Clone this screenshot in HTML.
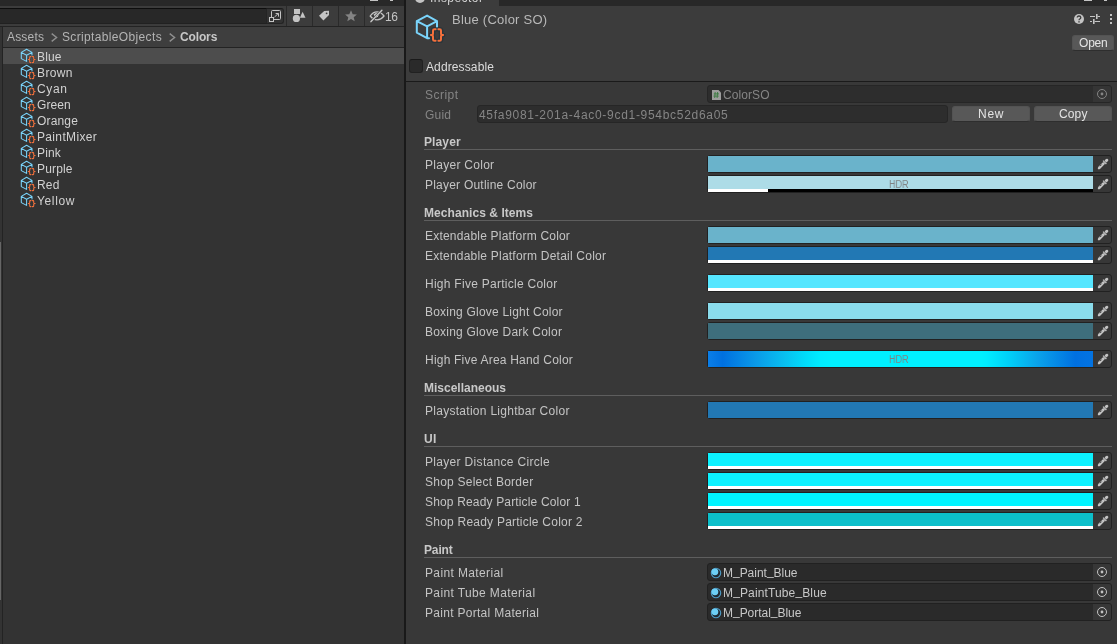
<!DOCTYPE html>
<html><head><meta charset="utf-8"><title>Unity</title>
<style>
*{box-sizing:border-box}
html,body{margin:0;padding:0}
body{width:1117px;height:644px;overflow:hidden;background:#383838;position:relative;font-family:"Liberation Sans",sans-serif}
div,svg,span{position:absolute}
.t{height:16px;white-space:pre;line-height:16px;will-change:transform}
.ico{overflow:visible}
em{font-style:normal;position:relative;top:-2.4px}
.cf{left:707px;width:405px;height:18px;border:1px solid #212121;border-radius:3px;background:#373737}
.cf i{position:absolute;left:0;top:0;width:385px;height:16px}
.cf b{position:absolute;left:0;top:13px;width:385px;height:3px;background:#fff}
.cf u{position:absolute;left:60px;top:13px;width:325px;height:3px;background:#000}
.of{left:707px;width:405px;height:18px;border:1px solid #212121;border-radius:3px;background:#2a2a2a;overflow:hidden}
.of i{position:absolute;right:0;top:0;width:18px;height:16px;background:#373737}
.hl{left:424px;width:688px;height:1px;background:#5e5e5e}
.btn{background:#585858;border:1px solid #535353;border-bottom-color:#2e2e2e;border-radius:3px}
</style></head><body>

<div style="left:0;top:0;width:404px;height:644px;background:#333"></div>
<div style="left:0;top:0;width:404px;height:6px;background:#282828"></div>
<div style="left:0;top:6px;width:404px;height:20px;background:#3c3c3c"></div>
<div style="left:-5px;top:8px;width:289px;height:16px;background:#323232;border:1px solid #242424;border-top-color:#1c1c1c;border-radius:3px"></div>
<div style="left:-5px;top:8px;width:272px;height:16px;background:#282828;border:1px solid #212121;border-top-color:#0d0d0d;border-right-color:#242424"></div>
<div style="left:286px;top:6px;width:1px;height:20px;background:#2a2a2a"></div>
<div style="left:312px;top:6px;width:1px;height:20px;background:#2a2a2a"></div>
<div style="left:338px;top:6px;width:1px;height:20px;background:#2a2a2a"></div>
<div style="left:364px;top:6px;width:1px;height:20px;background:#2a2a2a"></div>
<div style="left:0;top:26px;width:404px;height:1px;background:#232323"></div>
<div style="left:3px;top:27px;width:401px;height:20px;background:#3e3e3e"></div>
<div style="left:3px;top:47px;width:401px;height:1px;background:#232323"></div>
<div style="left:3px;top:48px;width:401px;height:16px;background:#4d4d4d"></div>
<div style="left:2px;top:27px;width:1px;height:617px;background:#232323"></div>
<div style="left:0;top:242px;width:1px;height:358px;background:#666"></div>
<div style="left:404px;top:0;width:2px;height:644px;background:#191919"></div>
<div style="left:406px;top:0;width:711px;height:6px;background:#282828"></div>
<div style="left:406px;top:0;width:93px;height:6px;background:#3c3c3c"></div>
<div style="left:406px;top:6px;width:711px;height:75px;background:#3c3c3c"></div>
<div style="left:406px;top:81px;width:711px;height:1px;background:#1a1a1a"></div>
<div class="t" style="left:430px;top:-10px;font-size:12px;color:#d2d2d2;letter-spacing:.45px">Inspector</div>
<div style="left:415px;top:-7px;width:10px;height:10px;border-radius:5px;background:#c4c4c4"></div>
<div style="left:370px;top:0;width:8px;height:1px;background:#c4c4c4"></div>
<div style="left:390px;top:0;width:3px;height:1px;background:#c4c4c4"></div>
<div style="left:1084px;top:0;width:8px;height:1px;background:#c4c4c4"></div>
<div style="left:1104px;top:0;width:3px;height:1px;background:#c4c4c4"></div>
<svg style="left:268px;top:9px" width="15" height="14" viewBox="0 0 15 14"><g fill="none" stroke="#c4c4c4" stroke-width="1"><rect x="3.5" y="1.5" width="9" height="9" rx="1"/><rect x="1.5" y="8.5" width="4" height="4" fill="#323232"/><path d="M6.5 8 L10.3 4.5 M7.6 4.5 H10.5 V7.6"/></g></svg>
<svg style="left:292px;top:8px" width="15" height="15" viewBox="0 0 15 15"><g fill="#c4c4c4"><rect x="2" y="1" width="6" height="5"/><circle cx="4.4" cy="10.4" r="3.6"/><path d="M10.6 3.8 L13.5 9.8 H7.9 Z"/></g></svg>
<svg style="left:318px;top:9px" width="13" height="13" viewBox="0 0 13 13"><path d="M1 6.8 L6.2 2 L11 1.7 V6 L5.4 11.6 Z" fill="#c4c4c4"/><circle cx="8.6" cy="4.3" r=".9" fill="#3c3c3c"/></svg>
<svg style="left:344px;top:10px" width="14" height="12" viewBox="0 0 14 12"><path d="M7 0.3 L8.7 4.2 L12.9 4.5 L9.7 7.2 L10.7 11.3 L7 9.1 L3.3 11.3 L4.3 7.2 L1.1 4.5 L5.3 4.2 Z" fill="#848484"/></svg>
<svg style="left:369px;top:9px" width="16" height="14" viewBox="0 0 16 14"><path d="M1.2 7 Q4 2.9 8 2.9 Q12 2.9 15 7 Q12 10.8 8 10.8 Q4 10.8 1.2 7Z" fill="#3a3a3a" stroke="#c4c4c4" stroke-width="1.3"/><path d="M4.6 5.6 Q6.2 3.4 9.6 3.4 L5.8 8Z" fill="#c4c4c4"/><path d="M2 12.6 L12.9 1.2" stroke="#3c3c3c" stroke-width="2.6"/><path d="M2 12.6 L12.9 1.2" stroke="#c4c4c4" stroke-width="1.5" stroke-linecap="round"/><path d="M7.6 8.4 L9.4 6.6" stroke="#c4c4c4" stroke-width="1"/></svg>
<svg class="ico" style="left:413px;top:11px" width="32" height="32" viewBox="0 0 32 32"><g fill="none" stroke-linecap="round" stroke-linejoin="round"><path d="M14.1 4.6 L3.8 10.1 L14.1 15.3 L24 10.1 Z M3.8 10.1 V21.6 L14.1 27.2 V15.3 M24 10.1 V16.5 M14.1 27.2 H16" stroke="#7ad4fb" stroke-width="2"/><path d="M22.6 18.2 H21.4 Q20 18.2 20 19.6 V22.4 Q20 24 17.9 24 Q20 24 20 25.6 V28.4 Q20 29.8 21.4 29.8 H22.6 M25.4 18.2 H26.6 Q28 18.2 28 19.6 V22.4 Q28 24 30.1 24 Q28 24 28 25.6 V28.4 Q28 29.8 26.6 29.8 H25.4" stroke="#25333b" stroke-width="4.6" opacity=".85"/><path d="M22.6 18.2 H21.4 Q20 18.2 20 19.6 V22.4 Q20 24 17.9 24 Q20 24 20 25.6 V28.4 Q20 29.8 21.4 29.8 H22.6 M25.4 18.2 H26.6 Q28 18.2 28 19.6 V22.4 Q28 24 30.1 24 Q28 24 28 25.6 V28.4 Q28 29.8 26.6 29.8 H25.4" stroke="#f4703c" stroke-width="2"/></g></svg>
<svg class="ico" style="left:19px;top:47px" width="16" height="16" viewBox="0 0 16 16"><g fill="none" stroke-linecap="round" stroke-linejoin="round" transform="translate(0.5,0.5)"><path d="M7.1 1.8 L1.8 4.9 L7.1 7.7 L12.5 4.9 Z M1.8 4.9 V11.1 L7.1 13.9 V7.7 M12.5 4.9 V7.6" stroke="#7ad4fb" stroke-width="1.05"/><path d="M11.5 9.1 H10.8 Q10.2 9.1 10.2 9.7 V11.2 Q10.2 12 8.8 12 Q10.2 12 10.2 12.8 V14.5 Q10.2 15.1 10.8 15.1 H11.5 M12.9 9.1 H13.6 Q14.2 9.1 14.2 9.7 V11.2 Q14.2 12 15.6 12 Q14.2 12 14.2 12.8 V14.5 Q14.2 15.1 13.6 15.1 H12.9" stroke="#2b3a42" stroke-width="2.4" opacity=".5"/><path d="M11.5 9.1 H10.8 Q10.2 9.1 10.2 9.7 V11.2 Q10.2 12 8.8 12 Q10.2 12 10.2 12.8 V14.5 Q10.2 15.1 10.8 15.1 H11.5 M12.9 9.1 H13.6 Q14.2 9.1 14.2 9.7 V11.2 Q14.2 12 15.6 12 Q14.2 12 14.2 12.8 V14.5 Q14.2 15.1 13.6 15.1 H12.9" stroke="#f5703a" stroke-width="1.05"/></g></svg>
<svg class="ico" style="left:19px;top:63px" width="16" height="16" viewBox="0 0 16 16"><g fill="none" stroke-linecap="round" stroke-linejoin="round" transform="translate(0.5,0.5)"><path d="M7.1 1.8 L1.8 4.9 L7.1 7.7 L12.5 4.9 Z M1.8 4.9 V11.1 L7.1 13.9 V7.7 M12.5 4.9 V7.6" stroke="#7ad4fb" stroke-width="1.05"/><path d="M11.5 9.1 H10.8 Q10.2 9.1 10.2 9.7 V11.2 Q10.2 12 8.8 12 Q10.2 12 10.2 12.8 V14.5 Q10.2 15.1 10.8 15.1 H11.5 M12.9 9.1 H13.6 Q14.2 9.1 14.2 9.7 V11.2 Q14.2 12 15.6 12 Q14.2 12 14.2 12.8 V14.5 Q14.2 15.1 13.6 15.1 H12.9" stroke="#2b3a42" stroke-width="2.4" opacity=".5"/><path d="M11.5 9.1 H10.8 Q10.2 9.1 10.2 9.7 V11.2 Q10.2 12 8.8 12 Q10.2 12 10.2 12.8 V14.5 Q10.2 15.1 10.8 15.1 H11.5 M12.9 9.1 H13.6 Q14.2 9.1 14.2 9.7 V11.2 Q14.2 12 15.6 12 Q14.2 12 14.2 12.8 V14.5 Q14.2 15.1 13.6 15.1 H12.9" stroke="#f5703a" stroke-width="1.05"/></g></svg>
<svg class="ico" style="left:19px;top:79px" width="16" height="16" viewBox="0 0 16 16"><g fill="none" stroke-linecap="round" stroke-linejoin="round" transform="translate(0.5,0.5)"><path d="M7.1 1.8 L1.8 4.9 L7.1 7.7 L12.5 4.9 Z M1.8 4.9 V11.1 L7.1 13.9 V7.7 M12.5 4.9 V7.6" stroke="#7ad4fb" stroke-width="1.05"/><path d="M11.5 9.1 H10.8 Q10.2 9.1 10.2 9.7 V11.2 Q10.2 12 8.8 12 Q10.2 12 10.2 12.8 V14.5 Q10.2 15.1 10.8 15.1 H11.5 M12.9 9.1 H13.6 Q14.2 9.1 14.2 9.7 V11.2 Q14.2 12 15.6 12 Q14.2 12 14.2 12.8 V14.5 Q14.2 15.1 13.6 15.1 H12.9" stroke="#2b3a42" stroke-width="2.4" opacity=".5"/><path d="M11.5 9.1 H10.8 Q10.2 9.1 10.2 9.7 V11.2 Q10.2 12 8.8 12 Q10.2 12 10.2 12.8 V14.5 Q10.2 15.1 10.8 15.1 H11.5 M12.9 9.1 H13.6 Q14.2 9.1 14.2 9.7 V11.2 Q14.2 12 15.6 12 Q14.2 12 14.2 12.8 V14.5 Q14.2 15.1 13.6 15.1 H12.9" stroke="#f5703a" stroke-width="1.05"/></g></svg>
<svg class="ico" style="left:19px;top:95px" width="16" height="16" viewBox="0 0 16 16"><g fill="none" stroke-linecap="round" stroke-linejoin="round" transform="translate(0.5,0.5)"><path d="M7.1 1.8 L1.8 4.9 L7.1 7.7 L12.5 4.9 Z M1.8 4.9 V11.1 L7.1 13.9 V7.7 M12.5 4.9 V7.6" stroke="#7ad4fb" stroke-width="1.05"/><path d="M11.5 9.1 H10.8 Q10.2 9.1 10.2 9.7 V11.2 Q10.2 12 8.8 12 Q10.2 12 10.2 12.8 V14.5 Q10.2 15.1 10.8 15.1 H11.5 M12.9 9.1 H13.6 Q14.2 9.1 14.2 9.7 V11.2 Q14.2 12 15.6 12 Q14.2 12 14.2 12.8 V14.5 Q14.2 15.1 13.6 15.1 H12.9" stroke="#2b3a42" stroke-width="2.4" opacity=".5"/><path d="M11.5 9.1 H10.8 Q10.2 9.1 10.2 9.7 V11.2 Q10.2 12 8.8 12 Q10.2 12 10.2 12.8 V14.5 Q10.2 15.1 10.8 15.1 H11.5 M12.9 9.1 H13.6 Q14.2 9.1 14.2 9.7 V11.2 Q14.2 12 15.6 12 Q14.2 12 14.2 12.8 V14.5 Q14.2 15.1 13.6 15.1 H12.9" stroke="#f5703a" stroke-width="1.05"/></g></svg>
<svg class="ico" style="left:19px;top:111px" width="16" height="16" viewBox="0 0 16 16"><g fill="none" stroke-linecap="round" stroke-linejoin="round" transform="translate(0.5,0.5)"><path d="M7.1 1.8 L1.8 4.9 L7.1 7.7 L12.5 4.9 Z M1.8 4.9 V11.1 L7.1 13.9 V7.7 M12.5 4.9 V7.6" stroke="#7ad4fb" stroke-width="1.05"/><path d="M11.5 9.1 H10.8 Q10.2 9.1 10.2 9.7 V11.2 Q10.2 12 8.8 12 Q10.2 12 10.2 12.8 V14.5 Q10.2 15.1 10.8 15.1 H11.5 M12.9 9.1 H13.6 Q14.2 9.1 14.2 9.7 V11.2 Q14.2 12 15.6 12 Q14.2 12 14.2 12.8 V14.5 Q14.2 15.1 13.6 15.1 H12.9" stroke="#2b3a42" stroke-width="2.4" opacity=".5"/><path d="M11.5 9.1 H10.8 Q10.2 9.1 10.2 9.7 V11.2 Q10.2 12 8.8 12 Q10.2 12 10.2 12.8 V14.5 Q10.2 15.1 10.8 15.1 H11.5 M12.9 9.1 H13.6 Q14.2 9.1 14.2 9.7 V11.2 Q14.2 12 15.6 12 Q14.2 12 14.2 12.8 V14.5 Q14.2 15.1 13.6 15.1 H12.9" stroke="#f5703a" stroke-width="1.05"/></g></svg>
<svg class="ico" style="left:19px;top:127px" width="16" height="16" viewBox="0 0 16 16"><g fill="none" stroke-linecap="round" stroke-linejoin="round" transform="translate(0.5,0.5)"><path d="M7.1 1.8 L1.8 4.9 L7.1 7.7 L12.5 4.9 Z M1.8 4.9 V11.1 L7.1 13.9 V7.7 M12.5 4.9 V7.6" stroke="#7ad4fb" stroke-width="1.05"/><path d="M11.5 9.1 H10.8 Q10.2 9.1 10.2 9.7 V11.2 Q10.2 12 8.8 12 Q10.2 12 10.2 12.8 V14.5 Q10.2 15.1 10.8 15.1 H11.5 M12.9 9.1 H13.6 Q14.2 9.1 14.2 9.7 V11.2 Q14.2 12 15.6 12 Q14.2 12 14.2 12.8 V14.5 Q14.2 15.1 13.6 15.1 H12.9" stroke="#2b3a42" stroke-width="2.4" opacity=".5"/><path d="M11.5 9.1 H10.8 Q10.2 9.1 10.2 9.7 V11.2 Q10.2 12 8.8 12 Q10.2 12 10.2 12.8 V14.5 Q10.2 15.1 10.8 15.1 H11.5 M12.9 9.1 H13.6 Q14.2 9.1 14.2 9.7 V11.2 Q14.2 12 15.6 12 Q14.2 12 14.2 12.8 V14.5 Q14.2 15.1 13.6 15.1 H12.9" stroke="#f5703a" stroke-width="1.05"/></g></svg>
<svg class="ico" style="left:19px;top:143px" width="16" height="16" viewBox="0 0 16 16"><g fill="none" stroke-linecap="round" stroke-linejoin="round" transform="translate(0.5,0.5)"><path d="M7.1 1.8 L1.8 4.9 L7.1 7.7 L12.5 4.9 Z M1.8 4.9 V11.1 L7.1 13.9 V7.7 M12.5 4.9 V7.6" stroke="#7ad4fb" stroke-width="1.05"/><path d="M11.5 9.1 H10.8 Q10.2 9.1 10.2 9.7 V11.2 Q10.2 12 8.8 12 Q10.2 12 10.2 12.8 V14.5 Q10.2 15.1 10.8 15.1 H11.5 M12.9 9.1 H13.6 Q14.2 9.1 14.2 9.7 V11.2 Q14.2 12 15.6 12 Q14.2 12 14.2 12.8 V14.5 Q14.2 15.1 13.6 15.1 H12.9" stroke="#2b3a42" stroke-width="2.4" opacity=".5"/><path d="M11.5 9.1 H10.8 Q10.2 9.1 10.2 9.7 V11.2 Q10.2 12 8.8 12 Q10.2 12 10.2 12.8 V14.5 Q10.2 15.1 10.8 15.1 H11.5 M12.9 9.1 H13.6 Q14.2 9.1 14.2 9.7 V11.2 Q14.2 12 15.6 12 Q14.2 12 14.2 12.8 V14.5 Q14.2 15.1 13.6 15.1 H12.9" stroke="#f5703a" stroke-width="1.05"/></g></svg>
<svg class="ico" style="left:19px;top:159px" width="16" height="16" viewBox="0 0 16 16"><g fill="none" stroke-linecap="round" stroke-linejoin="round" transform="translate(0.5,0.5)"><path d="M7.1 1.8 L1.8 4.9 L7.1 7.7 L12.5 4.9 Z M1.8 4.9 V11.1 L7.1 13.9 V7.7 M12.5 4.9 V7.6" stroke="#7ad4fb" stroke-width="1.05"/><path d="M11.5 9.1 H10.8 Q10.2 9.1 10.2 9.7 V11.2 Q10.2 12 8.8 12 Q10.2 12 10.2 12.8 V14.5 Q10.2 15.1 10.8 15.1 H11.5 M12.9 9.1 H13.6 Q14.2 9.1 14.2 9.7 V11.2 Q14.2 12 15.6 12 Q14.2 12 14.2 12.8 V14.5 Q14.2 15.1 13.6 15.1 H12.9" stroke="#2b3a42" stroke-width="2.4" opacity=".5"/><path d="M11.5 9.1 H10.8 Q10.2 9.1 10.2 9.7 V11.2 Q10.2 12 8.8 12 Q10.2 12 10.2 12.8 V14.5 Q10.2 15.1 10.8 15.1 H11.5 M12.9 9.1 H13.6 Q14.2 9.1 14.2 9.7 V11.2 Q14.2 12 15.6 12 Q14.2 12 14.2 12.8 V14.5 Q14.2 15.1 13.6 15.1 H12.9" stroke="#f5703a" stroke-width="1.05"/></g></svg>
<svg class="ico" style="left:19px;top:175px" width="16" height="16" viewBox="0 0 16 16"><g fill="none" stroke-linecap="round" stroke-linejoin="round" transform="translate(0.5,0.5)"><path d="M7.1 1.8 L1.8 4.9 L7.1 7.7 L12.5 4.9 Z M1.8 4.9 V11.1 L7.1 13.9 V7.7 M12.5 4.9 V7.6" stroke="#7ad4fb" stroke-width="1.05"/><path d="M11.5 9.1 H10.8 Q10.2 9.1 10.2 9.7 V11.2 Q10.2 12 8.8 12 Q10.2 12 10.2 12.8 V14.5 Q10.2 15.1 10.8 15.1 H11.5 M12.9 9.1 H13.6 Q14.2 9.1 14.2 9.7 V11.2 Q14.2 12 15.6 12 Q14.2 12 14.2 12.8 V14.5 Q14.2 15.1 13.6 15.1 H12.9" stroke="#2b3a42" stroke-width="2.4" opacity=".5"/><path d="M11.5 9.1 H10.8 Q10.2 9.1 10.2 9.7 V11.2 Q10.2 12 8.8 12 Q10.2 12 10.2 12.8 V14.5 Q10.2 15.1 10.8 15.1 H11.5 M12.9 9.1 H13.6 Q14.2 9.1 14.2 9.7 V11.2 Q14.2 12 15.6 12 Q14.2 12 14.2 12.8 V14.5 Q14.2 15.1 13.6 15.1 H12.9" stroke="#f5703a" stroke-width="1.05"/></g></svg>
<svg class="ico" style="left:19px;top:191px" width="16" height="16" viewBox="0 0 16 16"><g fill="none" stroke-linecap="round" stroke-linejoin="round" transform="translate(0.5,0.5)"><path d="M7.1 1.8 L1.8 4.9 L7.1 7.7 L12.5 4.9 Z M1.8 4.9 V11.1 L7.1 13.9 V7.7 M12.5 4.9 V7.6" stroke="#7ad4fb" stroke-width="1.05"/><path d="M11.5 9.1 H10.8 Q10.2 9.1 10.2 9.7 V11.2 Q10.2 12 8.8 12 Q10.2 12 10.2 12.8 V14.5 Q10.2 15.1 10.8 15.1 H11.5 M12.9 9.1 H13.6 Q14.2 9.1 14.2 9.7 V11.2 Q14.2 12 15.6 12 Q14.2 12 14.2 12.8 V14.5 Q14.2 15.1 13.6 15.1 H12.9" stroke="#2b3a42" stroke-width="2.4" opacity=".5"/><path d="M11.5 9.1 H10.8 Q10.2 9.1 10.2 9.7 V11.2 Q10.2 12 8.8 12 Q10.2 12 10.2 12.8 V14.5 Q10.2 15.1 10.8 15.1 H11.5 M12.9 9.1 H13.6 Q14.2 9.1 14.2 9.7 V11.2 Q14.2 12 15.6 12 Q14.2 12 14.2 12.8 V14.5 Q14.2 15.1 13.6 15.1 H12.9" stroke="#f5703a" stroke-width="1.05"/></g></svg>
<svg style="left:51px;top:33px" width="7" height="9" viewBox="0 0 7 9"><path d="M0.7 .6 L5.6 4.5 L0.7 8.4" fill="none" stroke="#909090" stroke-width="1.4"/></svg>
<svg style="left:169.3px;top:33px" width="7" height="9" viewBox="0 0 7 9"><path d="M0.7 .6 L5.6 4.5 L0.7 8.4" fill="none" stroke="#909090" stroke-width="1.4"/></svg>
<svg style="left:1073px;top:13px" width="12" height="12" viewBox="0 0 12 12"><circle cx="6" cy="6" r="5" fill="#c4c4c4"/><path d="M4.2 4.6 Q4.2 3 6 3 Q7.8 3 7.8 4.5 Q7.8 5.4 6.8 6 Q6 6.5 6 7.3" fill="none" stroke="#3c3c3c" stroke-width="1.3"/><rect x="5.3" y="8.2" width="1.4" height="1.3" fill="#3c3c3c"/></svg>
<svg style="left:1089px;top:13px" width="12" height="12" viewBox="0 0 12 12"><g fill="#c4c4c4"><rect x="1" y="3" width="5" height="1"/><rect x="7" y="1" width="1.6" height="5"/><rect x="8.6" y="3" width="2.4" height="1"/><rect x="1" y="8" width="2" height="1"/><rect x="4" y="6" width="1.6" height="5"/><rect x="5.6" y="8" width="5.4" height="1"/></g></svg>
<div style="left:1110px;top:14px;width:2px;height:2px;background:#c4c4c4"></div>
<div style="left:1110px;top:18px;width:2px;height:2px;background:#c4c4c4"></div>
<div style="left:1110px;top:22px;width:2px;height:2px;background:#c4c4c4"></div>
<div class="btn" style="left:1072px;top:35px;width:42px;height:16px"></div>
<div style="left:409px;top:59px;width:14px;height:14px;background:#2a2a2a;border:1px solid #212121;border-top-color:#1a1a1a;border-radius:3px"></div>
<div class="of" style="top:85px;background:#2d2d2d;border-color:#262626"><i style="background:#353535"></i></div>
<svg style="left:712px;top:90px" width="9" height="10" viewBox="0 0 9 10"><path d="M0 0 H6.5 L9 2.5 V10 H0 Z" fill="#9d9d9d"/><path d="M3.2 2 L2.7 8 M5.6 2 L5.1 8 M1.8 3.9 H7 M1.5 6.1 H6.7" stroke="#3a7a40" stroke-width=".9" fill="none"/></svg>
<div style="left:477px;top:105px;width:471px;height:18px;background:#2d2d2d;border:1px solid #262626;border-radius:3px"></div>
<div class="btn" style="left:952px;top:106px;width:78px;height:16px"></div>
<div class="btn" style="left:1034px;top:106px;width:78px;height:16px"></div>
<svg style="left:1096px;top:88px" width="12" height="12" viewBox="0 0 12 12"><circle cx="6" cy="6" r="4.5" fill="none" stroke="#858585" stroke-width="1"/><circle cx="6" cy="6" r="1.4" fill="#858585"/></svg>
<div class="hl" style="top:149px"></div>
<div class="cf" style="top:155px"><i style="background:#6ab3cb"></i></div>
<svg style="left:1097px;top:158px" width="12" height="12" viewBox="0 0 12 12"><g fill="#c4c4c4"><path d="M1 11.3 Q0.3 10 1.6 8.5 L6.2 3.9 L8.1 5.8 L3.5 10.4 Q2.3 11.6 1 11.3 Z"/><path d="M5.6 3.1 L6.5 2.2 L9.8 5.5 L8.9 6.4 Z"/><path d="M7.6 2.7 Q8.7 0.3 10.3 0.7 Q11.6 1.2 11.3 2.6 Q10.8 3.9 9.3 4.4 Z"/></g><path d="M3 8.2 L4.6 6.6" stroke="#373737" stroke-width="1"/></svg>
<div class="cf" style="top:175px"><i style="background:#addce7"></i><b></b><u></u></div>
<svg style="left:1097px;top:178px" width="12" height="12" viewBox="0 0 12 12"><g fill="#c4c4c4"><path d="M1 11.3 Q0.3 10 1.6 8.5 L6.2 3.9 L8.1 5.8 L3.5 10.4 Q2.3 11.6 1 11.3 Z"/><path d="M5.6 3.1 L6.5 2.2 L9.8 5.5 L8.9 6.4 Z"/><path d="M7.6 2.7 Q8.7 0.3 10.3 0.7 Q11.6 1.2 11.3 2.6 Q10.8 3.9 9.3 4.4 Z"/></g><path d="M3 8.2 L4.6 6.6" stroke="#373737" stroke-width="1"/></svg>
<div class="hl" style="top:220px"></div>
<div class="cf" style="top:226px"><i style="background:#6ab3cb"></i></div>
<svg style="left:1097px;top:229px" width="12" height="12" viewBox="0 0 12 12"><g fill="#c4c4c4"><path d="M1 11.3 Q0.3 10 1.6 8.5 L6.2 3.9 L8.1 5.8 L3.5 10.4 Q2.3 11.6 1 11.3 Z"/><path d="M5.6 3.1 L6.5 2.2 L9.8 5.5 L8.9 6.4 Z"/><path d="M7.6 2.7 Q8.7 0.3 10.3 0.7 Q11.6 1.2 11.3 2.6 Q10.8 3.9 9.3 4.4 Z"/></g><path d="M3 8.2 L4.6 6.6" stroke="#373737" stroke-width="1"/></svg>
<div class="cf" style="top:246px"><i style="background:#2278b4"></i><b></b></div>
<svg style="left:1097px;top:249px" width="12" height="12" viewBox="0 0 12 12"><g fill="#c4c4c4"><path d="M1 11.3 Q0.3 10 1.6 8.5 L6.2 3.9 L8.1 5.8 L3.5 10.4 Q2.3 11.6 1 11.3 Z"/><path d="M5.6 3.1 L6.5 2.2 L9.8 5.5 L8.9 6.4 Z"/><path d="M7.6 2.7 Q8.7 0.3 10.3 0.7 Q11.6 1.2 11.3 2.6 Q10.8 3.9 9.3 4.4 Z"/></g><path d="M3 8.2 L4.6 6.6" stroke="#373737" stroke-width="1"/></svg>
<div class="cf" style="top:274px"><i style="background:#56e6ff"></i><b></b></div>
<svg style="left:1097px;top:277px" width="12" height="12" viewBox="0 0 12 12"><g fill="#c4c4c4"><path d="M1 11.3 Q0.3 10 1.6 8.5 L6.2 3.9 L8.1 5.8 L3.5 10.4 Q2.3 11.6 1 11.3 Z"/><path d="M5.6 3.1 L6.5 2.2 L9.8 5.5 L8.9 6.4 Z"/><path d="M7.6 2.7 Q8.7 0.3 10.3 0.7 Q11.6 1.2 11.3 2.6 Q10.8 3.9 9.3 4.4 Z"/></g><path d="M3 8.2 L4.6 6.6" stroke="#373737" stroke-width="1"/></svg>
<div class="cf" style="top:302px"><i style="background:#8adcec"></i></div>
<svg style="left:1097px;top:305px" width="12" height="12" viewBox="0 0 12 12"><g fill="#c4c4c4"><path d="M1 11.3 Q0.3 10 1.6 8.5 L6.2 3.9 L8.1 5.8 L3.5 10.4 Q2.3 11.6 1 11.3 Z"/><path d="M5.6 3.1 L6.5 2.2 L9.8 5.5 L8.9 6.4 Z"/><path d="M7.6 2.7 Q8.7 0.3 10.3 0.7 Q11.6 1.2 11.3 2.6 Q10.8 3.9 9.3 4.4 Z"/></g><path d="M3 8.2 L4.6 6.6" stroke="#373737" stroke-width="1"/></svg>
<div class="cf" style="top:322px"><i style="background:#3e6e7c"></i></div>
<svg style="left:1097px;top:325px" width="12" height="12" viewBox="0 0 12 12"><g fill="#c4c4c4"><path d="M1 11.3 Q0.3 10 1.6 8.5 L6.2 3.9 L8.1 5.8 L3.5 10.4 Q2.3 11.6 1 11.3 Z"/><path d="M5.6 3.1 L6.5 2.2 L9.8 5.5 L8.9 6.4 Z"/><path d="M7.6 2.7 Q8.7 0.3 10.3 0.7 Q11.6 1.2 11.3 2.6 Q10.8 3.9 9.3 4.4 Z"/></g><path d="M3 8.2 L4.6 6.6" stroke="#373737" stroke-width="1"/></svg>
<div class="cf" style="top:350px"><i style="background:linear-gradient(90deg,#0a7ee8 0,#0070e0 3.8%,#0a9ae8 12.5%,#08c0f0 20%,#00dcfa 25.3%,#00ecff 29.2%,#00f0ff 32%,#00f0ff 71%,#00ecff 72.5%,#00d0f8 78.2%,#0aa4ea 85.3%,#0070e0 95.4%,#0373e2 100%)"></i></div>
<svg style="left:1097px;top:353px" width="12" height="12" viewBox="0 0 12 12"><g fill="#c4c4c4"><path d="M1 11.3 Q0.3 10 1.6 8.5 L6.2 3.9 L8.1 5.8 L3.5 10.4 Q2.3 11.6 1 11.3 Z"/><path d="M5.6 3.1 L6.5 2.2 L9.8 5.5 L8.9 6.4 Z"/><path d="M7.6 2.7 Q8.7 0.3 10.3 0.7 Q11.6 1.2 11.3 2.6 Q10.8 3.9 9.3 4.4 Z"/></g><path d="M3 8.2 L4.6 6.6" stroke="#373737" stroke-width="1"/></svg>
<div class="hl" style="top:395px"></div>
<div class="cf" style="top:401px"><i style="background:#2278b4"></i></div>
<svg style="left:1097px;top:404px" width="12" height="12" viewBox="0 0 12 12"><g fill="#c4c4c4"><path d="M1 11.3 Q0.3 10 1.6 8.5 L6.2 3.9 L8.1 5.8 L3.5 10.4 Q2.3 11.6 1 11.3 Z"/><path d="M5.6 3.1 L6.5 2.2 L9.8 5.5 L8.9 6.4 Z"/><path d="M7.6 2.7 Q8.7 0.3 10.3 0.7 Q11.6 1.2 11.3 2.6 Q10.8 3.9 9.3 4.4 Z"/></g><path d="M3 8.2 L4.6 6.6" stroke="#373737" stroke-width="1"/></svg>
<div class="hl" style="top:446px"></div>
<div class="cf" style="top:452px"><i style="background:#0cf2ff"></i><b></b></div>
<svg style="left:1097px;top:455px" width="12" height="12" viewBox="0 0 12 12"><g fill="#c4c4c4"><path d="M1 11.3 Q0.3 10 1.6 8.5 L6.2 3.9 L8.1 5.8 L3.5 10.4 Q2.3 11.6 1 11.3 Z"/><path d="M5.6 3.1 L6.5 2.2 L9.8 5.5 L8.9 6.4 Z"/><path d="M7.6 2.7 Q8.7 0.3 10.3 0.7 Q11.6 1.2 11.3 2.6 Q10.8 3.9 9.3 4.4 Z"/></g><path d="M3 8.2 L4.6 6.6" stroke="#373737" stroke-width="1"/></svg>
<div class="cf" style="top:472px"><i style="background:#0cf2ff"></i><b></b></div>
<svg style="left:1097px;top:475px" width="12" height="12" viewBox="0 0 12 12"><g fill="#c4c4c4"><path d="M1 11.3 Q0.3 10 1.6 8.5 L6.2 3.9 L8.1 5.8 L3.5 10.4 Q2.3 11.6 1 11.3 Z"/><path d="M5.6 3.1 L6.5 2.2 L9.8 5.5 L8.9 6.4 Z"/><path d="M7.6 2.7 Q8.7 0.3 10.3 0.7 Q11.6 1.2 11.3 2.6 Q10.8 3.9 9.3 4.4 Z"/></g><path d="M3 8.2 L4.6 6.6" stroke="#373737" stroke-width="1"/></svg>
<div class="cf" style="top:492px"><i style="background:#00f4ff"></i><b></b></div>
<svg style="left:1097px;top:495px" width="12" height="12" viewBox="0 0 12 12"><g fill="#c4c4c4"><path d="M1 11.3 Q0.3 10 1.6 8.5 L6.2 3.9 L8.1 5.8 L3.5 10.4 Q2.3 11.6 1 11.3 Z"/><path d="M5.6 3.1 L6.5 2.2 L9.8 5.5 L8.9 6.4 Z"/><path d="M7.6 2.7 Q8.7 0.3 10.3 0.7 Q11.6 1.2 11.3 2.6 Q10.8 3.9 9.3 4.4 Z"/></g><path d="M3 8.2 L4.6 6.6" stroke="#373737" stroke-width="1"/></svg>
<div class="cf" style="top:512px"><i style="background:#0cbfca"></i><b></b></div>
<svg style="left:1097px;top:515px" width="12" height="12" viewBox="0 0 12 12"><g fill="#c4c4c4"><path d="M1 11.3 Q0.3 10 1.6 8.5 L6.2 3.9 L8.1 5.8 L3.5 10.4 Q2.3 11.6 1 11.3 Z"/><path d="M5.6 3.1 L6.5 2.2 L9.8 5.5 L8.9 6.4 Z"/><path d="M7.6 2.7 Q8.7 0.3 10.3 0.7 Q11.6 1.2 11.3 2.6 Q10.8 3.9 9.3 4.4 Z"/></g><path d="M3 8.2 L4.6 6.6" stroke="#373737" stroke-width="1"/></svg>
<div class="hl" style="top:557px"></div>
<div class="of" style="top:563px"><i></i></div>
<svg style="left:710px;top:567px" width="12" height="12" viewBox="0 0 12 12"><circle cx="6" cy="6" r="4.7" fill="#1f2a33" stroke="#4d9ac4" stroke-width="1.1"/><circle cx="4.9" cy="4.8" r="3.4" fill="#6dcff6"/></svg>
<svg style="left:1096px;top:566px" width="12" height="12" viewBox="0 0 12 12"><circle cx="6" cy="6" r="4.5" fill="none" stroke="#c4c4c4" stroke-width="1"/><circle cx="6" cy="6" r="1.4" fill="#c4c4c4"/></svg>
<div class="of" style="top:583px"><i></i></div>
<svg style="left:710px;top:587px" width="12" height="12" viewBox="0 0 12 12"><circle cx="6" cy="6" r="4.7" fill="#1f2a33" stroke="#4d9ac4" stroke-width="1.1"/><circle cx="4.9" cy="4.8" r="3.4" fill="#6dcff6"/></svg>
<svg style="left:1096px;top:586px" width="12" height="12" viewBox="0 0 12 12"><circle cx="6" cy="6" r="4.5" fill="none" stroke="#c4c4c4" stroke-width="1"/><circle cx="6" cy="6" r="1.4" fill="#c4c4c4"/></svg>
<div class="of" style="top:603px"><i></i></div>
<svg style="left:710px;top:607px" width="12" height="12" viewBox="0 0 12 12"><circle cx="6" cy="6" r="4.7" fill="#1f2a33" stroke="#4d9ac4" stroke-width="1.1"/><circle cx="4.9" cy="4.8" r="3.4" fill="#6dcff6"/></svg>
<svg style="left:1096px;top:606px" width="12" height="12" viewBox="0 0 12 12"><circle cx="6" cy="6" r="4.5" fill="none" stroke="#c4c4c4" stroke-width="1"/><circle cx="6" cy="6" r="1.4" fill="#c4c4c4"/></svg>
<div class="t" style="left:7.0px;top:29px;font-size:12px;color:#b4b4b4;letter-spacing:0.18px">Assets</div>
<div class="t" style="left:62.4px;top:29px;font-size:12px;color:#b4b4b4;letter-spacing:0.35px">ScriptableObjects</div>
<div class="t" style="left:180.0px;top:29px;font-size:12px;font-weight:bold;color:#c8c8c8;letter-spacing:-0.14px">Colors</div>
<div class="t" style="left:36.8px;top:49px;font-size:12px;color:#d2d2d2;letter-spacing:0.17px">Blue</div>
<div class="t" style="left:36.8px;top:65px;font-size:12px;color:#d2d2d2;letter-spacing:0.38px">Brown</div>
<div class="t" style="left:36.8px;top:81px;font-size:12px;color:#d2d2d2;letter-spacing:0.63px">Cyan</div>
<div class="t" style="left:36.8px;top:97px;font-size:12px;color:#d2d2d2;letter-spacing:0.10px">Green</div>
<div class="t" style="left:36.8px;top:113px;font-size:12px;color:#d2d2d2;letter-spacing:0.16px">Orange</div>
<div class="t" style="left:36.8px;top:129px;font-size:12px;color:#d2d2d2;letter-spacing:0.34px">PaintMixer</div>
<div class="t" style="left:36.8px;top:145px;font-size:12px;color:#d2d2d2;letter-spacing:0.13px">Pink</div>
<div class="t" style="left:36.8px;top:161px;font-size:12px;color:#d2d2d2;letter-spacing:0.16px">Purple</div>
<div class="t" style="left:36.8px;top:177px;font-size:12px;color:#d2d2d2;letter-spacing:0.20px">Red</div>
<div class="t" style="left:36.8px;top:193px;font-size:12px;color:#d2d2d2;letter-spacing:0.64px">Yellow</div>
<div class="t" style="left:384.9px;top:9px;font-size:12px;color:#c4c4c4;letter-spacing:-0.30px">16</div>
<div class="t" style="left:451.7px;top:12px;font-size:13px;color:#b9b9b9;letter-spacing:0.24px">Blue (Color SO)</div>
<div class="t" style="left:1078.6px;top:35px;font-size:12px;color:#e4e4e4;letter-spacing:-0.20px">Open</div>
<div class="t" style="left:426.2px;top:59px;font-size:12px;color:#dcdcdc;letter-spacing:0.12px">Addressable</div>
<div class="t" style="left:424.9px;top:87px;font-size:12px;color:#858585;letter-spacing:0.46px">Script</div>
<div class="t" style="left:722.8px;top:87px;font-size:12px;color:#858585;letter-spacing:0.08px">ColorSO</div>
<div class="t" style="left:424.9px;top:107px;font-size:12px;color:#858585;letter-spacing:0.23px">Guid</div>
<div class="t" style="left:479.0px;top:107px;font-size:12px;color:#858585;letter-spacing:0.70px">45fa9081-201a-4ac0-9cd1-954bc52d6a05</div>
<div class="t" style="left:977.5px;top:106px;font-size:12px;color:#e4e4e4;letter-spacing:0.75px">New</div>
<div class="t" style="left:1058.6px;top:106px;font-size:12px;color:#e4e4e4;letter-spacing:0.13px">Copy</div>
<div class="t" style="left:423.6px;top:134px;font-size:12px;font-weight:bold;color:#c8c8c8;letter-spacing:0.12px">Player</div>
<div class="t" style="left:424.5px;top:157px;font-size:12px;color:#c4c4c4;letter-spacing:0.28px">Player Color</div>
<div class="t" style="left:424.5px;top:177px;font-size:12px;color:#c4c4c4;letter-spacing:0.22px">Player Outline Color</div>
<div class="t" style="left:423.6px;top:205px;font-size:12px;font-weight:bold;color:#c8c8c8;letter-spacing:0.06px">Mechanics &amp; Items</div>
<div class="t" style="left:424.5px;top:228px;font-size:12px;color:#c4c4c4;letter-spacing:0.20px">Extendable Platform Color</div>
<div class="t" style="left:424.5px;top:248px;font-size:12px;color:#c4c4c4;letter-spacing:0.22px">Extendable Platform Detail Color</div>
<div class="t" style="left:424.5px;top:276px;font-size:12px;color:#c4c4c4;letter-spacing:0.27px">High Five Particle Color</div>
<div class="t" style="left:424.5px;top:304px;font-size:12px;color:#c4c4c4;letter-spacing:0.21px">Boxing Glove Light Color</div>
<div class="t" style="left:424.5px;top:324px;font-size:12px;color:#c4c4c4;letter-spacing:0.22px">Boxing Glove Dark Color</div>
<div class="t" style="left:424.5px;top:352px;font-size:12px;color:#c4c4c4;letter-spacing:0.21px">High Five Area Hand Color</div>
<div class="t" style="left:423.6px;top:380px;font-size:12px;font-weight:bold;color:#c8c8c8;letter-spacing:0.00px">Miscellaneous</div>
<div class="t" style="left:424.5px;top:403px;font-size:12px;color:#c4c4c4;letter-spacing:0.28px">Playstation Lightbar Color</div>
<div class="t" style="left:423.6px;top:431px;font-size:12px;font-weight:bold;color:#c8c8c8;letter-spacing:0.40px">UI</div>
<div class="t" style="left:424.5px;top:454px;font-size:12px;color:#c4c4c4;letter-spacing:0.32px">Player Distance Circle</div>
<div class="t" style="left:424.5px;top:474px;font-size:12px;color:#c4c4c4;letter-spacing:0.24px">Shop Select Border</div>
<div class="t" style="left:424.5px;top:494px;font-size:12px;color:#c4c4c4;letter-spacing:0.16px">Shop Ready Particle Color 1</div>
<div class="t" style="left:424.5px;top:514px;font-size:12px;color:#c4c4c4;letter-spacing:0.23px">Shop Ready Particle Color 2</div>
<div class="t" style="left:423.6px;top:542px;font-size:12px;font-weight:bold;color:#c8c8c8;letter-spacing:-0.15px">Paint</div>
<div class="t" style="left:424.5px;top:565px;font-size:12px;color:#c4c4c4;letter-spacing:0.37px">Paint Material</div>
<div class="t" style="left:424.5px;top:585px;font-size:12px;color:#c4c4c4;letter-spacing:0.37px">Paint Tube Material</div>
<div class="t" style="left:424.5px;top:605px;font-size:12px;color:#c4c4c4;letter-spacing:0.29px">Paint Portal Material</div>
<div class="t" style="left:889.2px;top:177px;font-size:10px;color:#808384;transform:scaleX(0.900);transform-origin:0 0">HDR</div>
<div class="t" style="left:889.2px;top:352px;font-size:10px;color:#808384;transform:scaleX(0.900);transform-origin:0 0">HDR</div>
<div class="t" style="left:722.6px;top:565px;font-size:12px;color:#c8c8c8;letter-spacing:-0.02px">M<em>_</em>Paint<em>_</em>Blue</div>
<div class="t" style="left:722.6px;top:585px;font-size:12px;color:#c8c8c8;letter-spacing:0.13px">M<em>_</em>PaintTube<em>_</em>Blue</div>
<div class="t" style="left:722.6px;top:605px;font-size:12px;color:#c8c8c8;letter-spacing:-0.03px">M<em>_</em>Portal<em>_</em>Blue</div>
</body></html>
